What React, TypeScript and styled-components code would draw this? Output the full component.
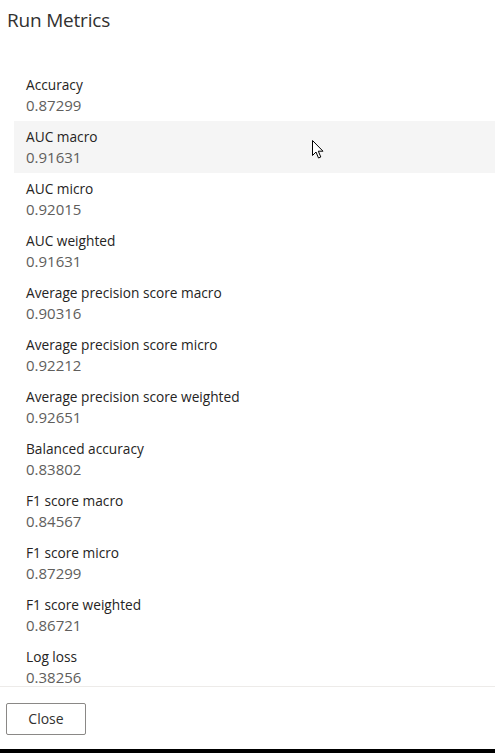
import React from "react";
import styled, { createGlobalStyle } from "styled-components";

const GlobalStyle = createGlobalStyle`
  html, body {
    margin: 0;
    padding: 0;
    background: #ffffff;
  }
  body {
    font-family: "Segoe UI", "Open Sans", "Noto Sans", sans-serif;
    color: #323130;
  }
`;

const Page = styled.div`
  width: 495px;
  height: 753px;
  display: flex;
  flex-direction: column;
  background: #ffffff;
  overflow: hidden;
  position: relative;
`;

const Header = styled.div`
  height: 60px;
  flex: 0 0 60px;
  padding: 7px 7px 0;
  box-sizing: border-box;
`;

const Title = styled.h1`
  margin: 0;
  font-size: 19px;
  font-weight: 400;
  line-height: 26px;
  color: #323130;
  letter-spacing: -0.2px;
`;

const List = styled.div`
  flex: 1 1 auto;
  overflow: hidden;
  padding: 9px 0 0 14px;
  display: flex;
  flex-direction: column;
`;

const Row = styled.div<{ $hover?: boolean }>`
  height: 52px;
  flex: 0 0 52px;
  box-sizing: border-box;
  padding: 5px 12px;
  background: ${(p) => (p.$hover ? "#f5f5f5" : "transparent")};
  position: relative;
`;

const Label = styled.div`
  font-size: 13.7px;
  line-height: 21px;
  color: #252423;
  white-space: nowrap;
`;

const Value = styled.div`
  font-size: 15px;
  line-height: 21px;
  color: #605e5c;
`;

const Footer = styled.div`
  flex: 0 0 63px;
  box-sizing: border-box;
  border-top: 1px solid #edebe9;
  padding: 16px 6px 0;
`;

const Button = styled.button`
  display: flex;
  align-items: center;
  justify-content: center;
  width: 80px;
  height: 32px;
  box-sizing: border-box;
  border: 1px solid #8a8886;
  border-radius: 2px;
  background: #ffffff;
  color: #323130;
  font-family: inherit;
  font-size: 14px;
  line-height: 20px;
  font-weight: 400;
  padding: 0;
  cursor: pointer;
`;

const BottomBar = styled.div`
  flex: 0 0 4px;
  background: #000000;
`;

const Cursor = styled.svg`
  position: absolute;
  left: 298px;
  top: 19px;
`;

const metrics: [string, string][] = [
  ["Accuracy", "0.87299"],
  ["AUC macro", "0.91631"],
  ["AUC micro", "0.92015"],
  ["AUC weighted", "0.91631"],
  ["Average precision score macro", "0.90316"],
  ["Average precision score micro", "0.92212"],
  ["Average precision score weighted", "0.92651"],
  ["Balanced accuracy", "0.83802"],
  ["F1 score macro", "0.84567"],
  ["F1 score micro", "0.87299"],
  ["F1 score weighted", "0.86721"],
  ["Log loss", "0.38256"],
];

const App = () => {
  return (
    <>
      <GlobalStyle />
      <Page>
        <Header>
          <Title>Run Metrics</Title>
        </Header>
        <List>
          {metrics.map(([name, value], i) => (
            <Row key={name} $hover={i === 1}>
              <Label>{name}</Label>
              <Value>{value}</Value>
              {i === 1 && (
                <Cursor width="13" height="20" viewBox="0 0 13 20">
                  <path
                    d="M0.5 0.5 L0.5 15.5 L4 12 L6.5 18 L8.8 17 L6.3 11.2 L11 11.2 Z"
                    fill="#ffffff"
                    stroke="#000000"
                    strokeWidth="1"
                    strokeLinejoin="miter"
                  />
                </Cursor>
              )}
            </Row>
          ))}
        </List>
        <Footer>
          <Button>Close</Button>
        </Footer>
        <BottomBar />
      </Page>
    </>
  );
};

export default App;
